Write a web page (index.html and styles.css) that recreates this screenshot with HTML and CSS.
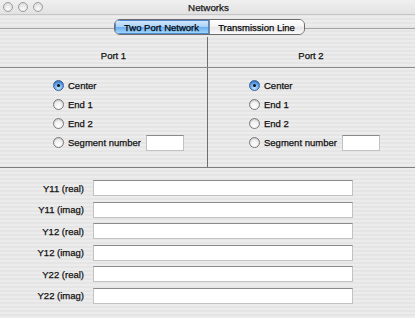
FILE: index.html
```html
<!DOCTYPE html>
<html lang="en">
<head>
    <meta charset="UTF-8">
    <title>Networks</title>
    <link rel="stylesheet" href="styles.css">
</head>
<body>
    <div class="window">
        <div class="titlebar">
            <div class="lights">
                <span class="light"></span>
                <span class="light"></span>
                <span class="light"></span>
            </div>
            <div class="title">Networks</div>
        </div>

        <div class="tabbar">
            <div class="segmented">
                <span class="segment selected">Two Port Network</span>
                <span class="segment">Transmission Line</span>
            </div>
        </div>

        <div class="ports">
            <div class="port port-1">
                <div class="port-head">Port 1</div>
                <div class="options">
                    <label class="option"><span class="radio checked"></span>Center</label>
                    <label class="option"><span class="radio"></span>End 1</label>
                    <label class="option"><span class="radio"></span>End 2</label>
                    <label class="option"><span class="radio"></span>Segment number <input type="text" class="small-field"></label>
                </div>
            </div>
            <div class="port port-2">
                <div class="port-head">Port 2</div>
                <div class="options">
                    <label class="option"><span class="radio checked"></span>Center</label>
                    <label class="option"><span class="radio"></span>End 1</label>
                    <label class="option"><span class="radio"></span>End 2</label>
                    <label class="option"><span class="radio"></span>Segment number <input type="text" class="small-field"></label>
                </div>
            </div>
        </div>

        <div class="fields">
            <label class="field-label">Y11 (real)</label><input type="text" class="field">
            <label class="field-label">Y11 (imag)</label><input type="text" class="field">
            <label class="field-label">Y12 (real)</label><input type="text" class="field">
            <label class="field-label">Y12 (imag)</label><input type="text" class="field">
            <label class="field-label">Y22 (real)</label><input type="text" class="field">
            <label class="field-label">Y22 (imag)</label><input type="text" class="field">
        </div>
    </div>
</body>
</html>
```

FILE: styles.css
```css
body {
    margin: 0;
    font-family: "Liberation Sans", Arial, sans-serif;
    font-size: 9.5px;
    color: #111;
    -webkit-text-stroke: 0.25px #111;
}
.window {
    width: 415px;
    height: 318px;
    overflow: hidden;
    background: repeating-linear-gradient(#ececec 0 2px, #e5e5e5 2px 4px);
}
.titlebar {
    height: 14px;
    display: flex;
    align-items: center;
    background: linear-gradient(#f0f0f0, #e2e2e2);
    border-bottom: 1px solid #c6c6c6;
}
.lights {
    display: flex;
    gap: 5px;
    padding-left: 3px;
}
.light {
    width: 8px;
    height: 8px;
    border-radius: 50%;
    border: 1px solid #9c9c9c;
    background: radial-gradient(circle at 50% 70%, #fbfbfb, #d4d4d4);
}
.title {
    flex: 1;
    text-align: center;
    padding-right: 41px;
    font-size: 9.8px;
    color: #222;
}
.tabbar {
    height: 22px;
    display: flex;
    justify-content: center;
    padding-top: 4px;
    box-sizing: border-box;
    background: linear-gradient(transparent 13px, #a2a2a2 13px, #a2a2a2 14px, transparent 14px);
}
.segmented {
    display: flex;
    height: 16px;
    margin-left: 3px;
    border: 1px solid #6d6d6d;
    border-radius: 6px;
    overflow: hidden;
    box-sizing: border-box;
}
.segment {
    width: 94px;
    display: flex;
    align-items: center;
    justify-content: center;
    background: linear-gradient(#ffffff, #f2f2f2 50%, #e6e6e6 51%, #fafafa);
    color: #000;
}
.segment + .segment {
    border-left: 1px solid #8a8a8a;
}
.segment.selected {
    background: linear-gradient(#d6ebfd, #a9d1f7 50%, #6aaef0 51%, #a6dbfd);
    box-shadow: inset 0 0 0 1px #4f86cc;
}
.ports {
    display: grid;
    grid-template-columns: 208px 1fr;
    border-bottom: 1px solid #7e7e7e;
}
.port-1 {
    border-right: 1px solid #6f6f6f;
}
.port-head {
    height: 31px;
    box-sizing: border-box;
    padding-top: 13px;
    line-height: 11px;
    text-align: center;
    border-bottom: 1px solid #8a8a8a;
}
.port-1 .port-head {
    padding-left: 20px;
}
.port-2 .port-head {
    margin-left: -1px;
}
.options {
    display: grid;
    grid-auto-rows: 19px;
    padding: 8px 0 15px 53px;
}
.port-2 .options {
    padding-left: 41px;
}
.option {
    display: flex;
    align-items: center;
    gap: 4px;
}
.radio {
    width: 9px;
    height: 9px;
    border-radius: 50%;
    border: 1px solid #7a7a7a;
    background: radial-gradient(circle at 50% 75%, #ffffff, #e2e2e2);
    box-shadow: inset 0 1px 1px rgba(0, 0, 0, 0.15);
    position: relative;
}
.radio.checked {
    border-color: #35619f;
    background: radial-gradient(circle at 50% 80%, #bfe3ff, #5c9ee6 60%, #3b78c8);
}
.radio.checked::after {
    content: "";
    position: absolute;
    left: 3px;
    top: 3px;
    width: 3px;
    height: 3px;
    border-radius: 50%;
    background: #111;
}
input {
    font: inherit;
    margin: 0;
    padding: 0 2px;
    background: #fff;
    border: 1px solid #c2c2c2;
    border-top-color: #8a8a8a;
    box-sizing: border-box;
    outline: none;
}
.small-field {
    width: 38px;
    height: 16px;
    margin-left: 1px;
}
.fields {
    display: grid;
    grid-template-columns: 84px 260px;
    column-gap: 9px;
    row-gap: 5.6px;
    padding-top: 12px;
    align-items: center;
}
.field-label {
    text-align: right;
}
.field {
    height: 16px;
}
```
